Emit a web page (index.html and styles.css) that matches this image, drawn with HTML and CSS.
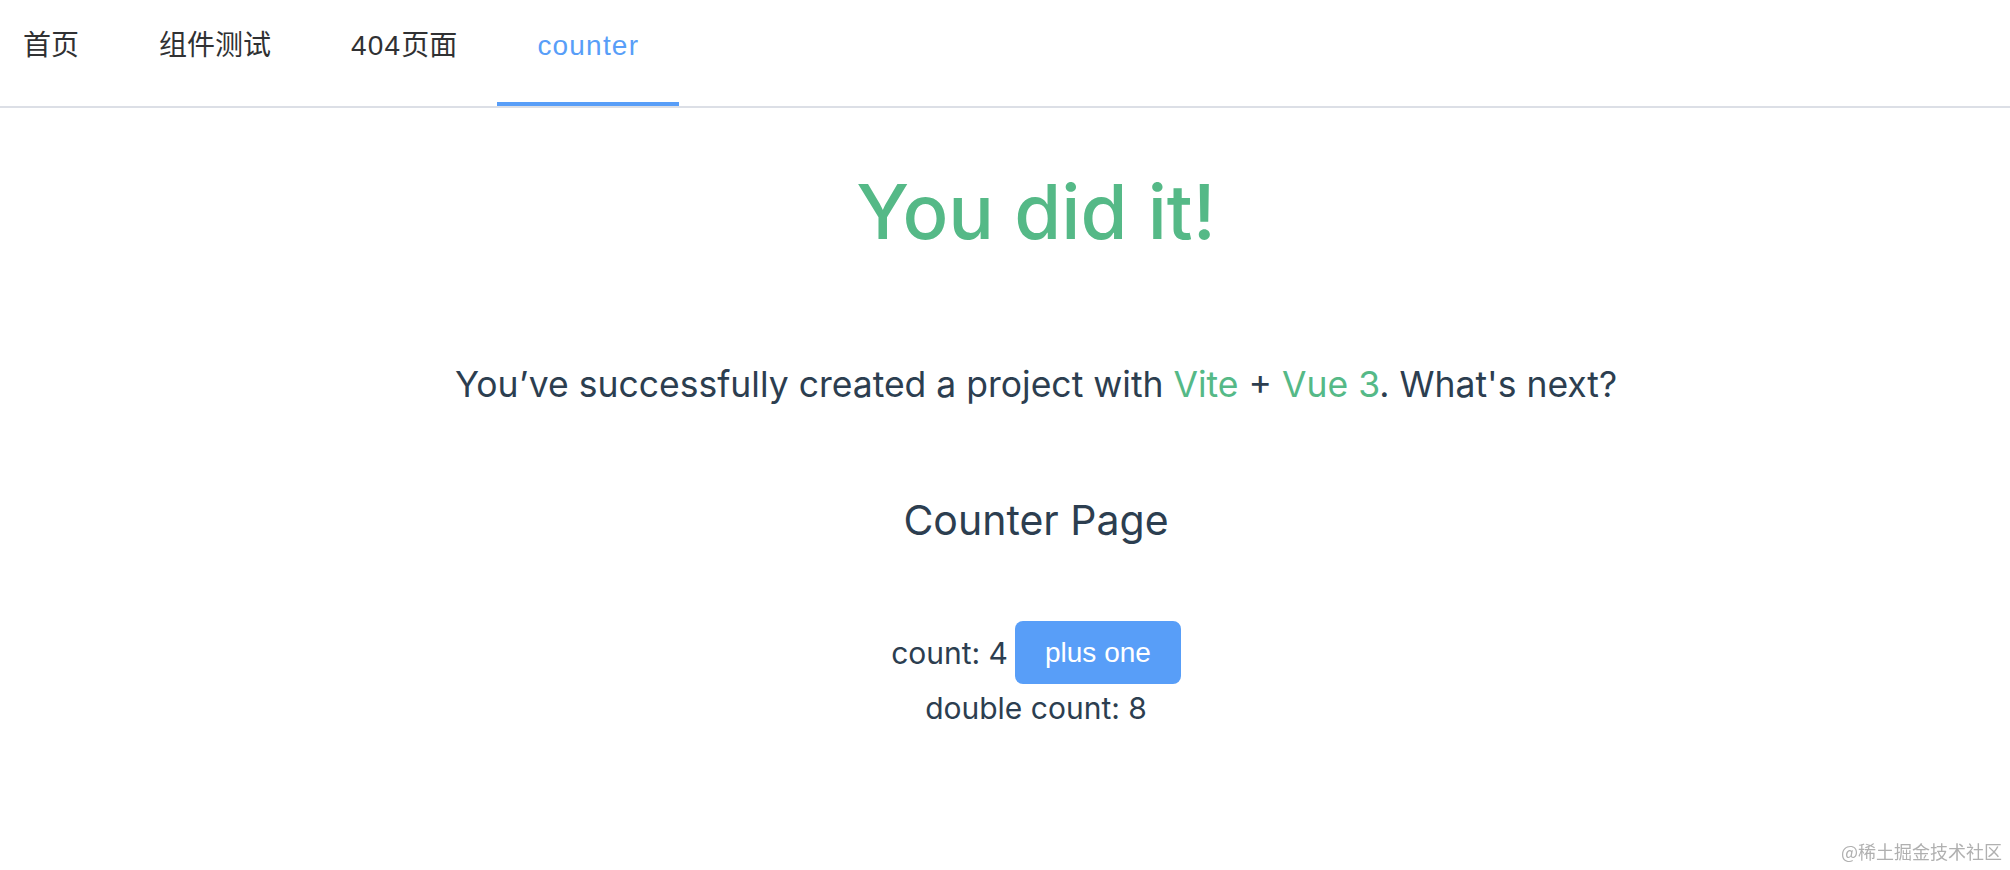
FILE: index.html
```html
<!DOCTYPE html>
<html lang="zh-CN">
<head>
  <meta charset="UTF-8">
  <meta name="viewport" content="width=device-width, initial-scale=1.0">
  <title>counter</title>
  <link rel="stylesheet" href="styles.css">
</head>
<body>
  <nav class="menu">
    <a href="#" class="menu-item">首页</a>
    <a href="#" class="menu-item">组件测试</a>
    <a href="#" class="menu-item"><span class="latin">404</span>页面</a>
    <a href="#" class="menu-item is-active"><span class="latin">counter</span></a>
  </nav>

  <main class="page">
    <h1 class="title">You did it!</h1>
    <p class="intro">You’ve successfully created a project with <a href="#">Vite</a> + <a href="#">Vue 3</a>. What's next?</p>

    <h2 class="counter-title">Counter Page</h2>
    <div class="count-row">
      <span id="count">count: 4</span>
      <button class="btn-primary" onclick="plusOne()">plus one</button>
    </div>
    <div id="double" class="double-row">double count: 8</div>
  </main>

  <div class="watermark">@稀土掘金技术社区</div>

  <script>
    let count = 4;

    function plusOne() {
      count++;
      document.getElementById('count').textContent = 'count: ' + count;
      document.getElementById('double').textContent = 'double count: ' + count * 2;
    }
  </script>
</body>
</html>
```

FILE: styles.css
```css
body {
  margin: 0;
  background: #fff;
  color: #2c3e50;
  font-family: Inter, "Noto Sans CJK SC", sans-serif;
}
.menu {
  display: flex;
  height: 106px;
  border-bottom: 2px solid #dcdfe6;
  font-family: "Liberation Sans", "Noto Sans CJK SC", sans-serif;
  font-size: 28px;
}
.menu-item {
  display: block;
  padding: 0 40px;
  line-height: 92px;
  height: 102px;
  border-bottom: 4px solid transparent;
  color: #303133;
  text-decoration: none;
}
.menu-item:first-child {
  padding-left: 23px;
}
.menu-item .latin {
  letter-spacing: 1.2px;
}
.menu-item.is-active {
  color: #589ef8;
  border-bottom-color: #589ef8;
}
.page {
  display: flex;
  flex-direction: column;
  align-items: center;
  padding: 53px 0 0 62px;
}
.title {
  margin: 0;
  font-size: 76px;
  line-height: 100px;
  font-weight: 500;
  color: #55b987;
}
.intro {
  margin: 100px 0 0;
  font-size: 35.5px;
  line-height: 48px;
}
.intro a {
  color: #55b987;
  text-decoration: none;
}
.counter-title {
  margin: 83px 0 0;
  font-size: 41px;
  line-height: 56px;
  font-weight: 400;
}
.count-row {
  display: flex;
  align-items: center;
  gap: 7px;
  margin-top: 73px;
  font-size: 30px;
}
.btn-primary {
  height: 63px;
  padding: 0 30px;
  border: none;
  border-radius: 8px;
  background: #589ef8;
  color: #fff;
  font-family: "Liberation Sans", sans-serif;
  font-size: 28px;
  cursor: pointer;
}
.double-row {
  font-size: 30px;
  line-height: 48px;
}
.watermark {
  position: fixed;
  right: 8px;
  bottom: 6px;
  font-family: "Noto Sans CJK SC", sans-serif;
  font-size: 18px;
  color: #b0b0b0;
}
```
